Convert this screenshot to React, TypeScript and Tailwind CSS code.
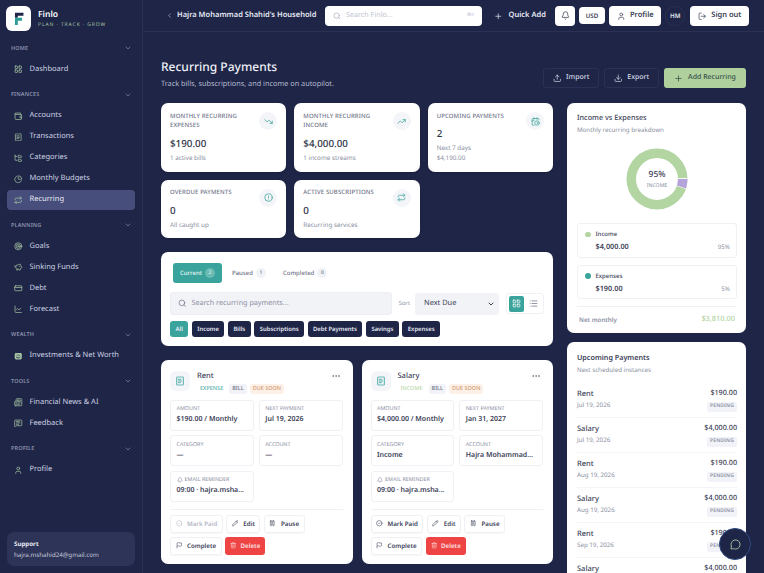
import type { ComponentType } from "react";
import {
  Bell,
  CalendarClock,
  ChartLine,
  ChartPie,
  ChevronDown,
  ChevronLeft,
  CircleAlert,
  CircleCheck,
  CreditCard,
  Download,
  Ellipsis,
  Flag,
  FolderTree,
  LayoutGrid,
  List,
  LogOut,
  MessageCircle,
  MessageSquareText,
  Newspaper,
  Pause,
  Pencil,
  PiggyBank,
  Plus,
  ReceiptText,
  Repeat,
  Search,
  Target,
  Trash2,
  TrendingDown,
  TrendingUp,
  Upload,
  User,
  Wallet,
  type LucideIcon,
} from "lucide-react";

type IconType = ComponentType<{ className?: string }>;
type NavItem = { label: string; icon: IconType; active?: boolean };

const InvestIcon = ({ className }: { className?: string }) => (
  <svg viewBox="0 0 24 24" className={className}>
    <rect x="2" y="3" width="20" height="18" rx="4" fill="currentColor" />
    <path d="M7 7h10v4H7z" fill="#1e2547" opacity=".45" />
    <path d="M6 14c2 3.5 10 3.5 12 0" fill="none" stroke="#1e2547" strokeWidth="2.5" />
  </svg>
);

const nav: { title: string; items: NavItem[] }[] = [
  { title: "HOME", items: [{ label: "Dashboard", icon: LayoutGrid }] },
  {
    title: "FINANCES",
    items: [
      { label: "Accounts", icon: Wallet },
      { label: "Transactions", icon: ReceiptText },
      { label: "Categories", icon: FolderTree },
      { label: "Monthly Budgets", icon: ChartPie },
      { label: "Recurring", icon: Repeat, active: true },
    ],
  },
  {
    title: "PLANNING",
    items: [
      { label: "Goals", icon: Target },
      { label: "Sinking Funds", icon: PiggyBank },
      { label: "Debt", icon: CreditCard },
      { label: "Forecast", icon: ChartLine },
    ],
  },
  { title: "WEALTH", items: [{ label: "Investments & Net Worth", icon: InvestIcon }] },
  {
    title: "TOOLS",
    items: [
      { label: "Financial News & AI", icon: Newspaper },
      { label: "Feedback", icon: MessageSquareText },
    ],
  },
  { title: "PROFILE", items: [{ label: "Profile", icon: User }] },
];

const Sidebar = () => (
  <aside className="w-[143px] shrink-0 h-full border-r border-[#2a3153] bg-[#1e2547] flex flex-col">
    <div className="flex items-center gap-[7px] px-[6px] pt-[6px]">
      <div className="w-[25px] h-[25px] rounded-[6px] bg-white flex items-center justify-center">
        <svg viewBox="0 0 24 24" className="w-[17px] h-[17px]">
          <path d="M7 4h12v4h-8v3H7z" fill="#1e2547" />
          <path d="M7 11h10v4H11v6H7z" fill="#2f9c95" />
        </svg>
      </div>
      <div>
        <div className="text-[8.5px] leading-[12px] font-semibold text-white">Finlo</div>
        <div className="text-[5px] leading-[8px] tracking-[0.18em] text-[#a9c6a4]">PLAN · TRACK · GROW</div>
      </div>
    </div>
    <nav className="mt-[9px] flex flex-col gap-[7.5px]">
      {nav.map((section) => (
        <div key={section.title}>
          <div className="h-[16px] flex items-center justify-between pl-[11px] pr-[10px]">
            <span className="text-[5.5px] font-semibold tracking-[0.03em] text-[#8a91ad]">{section.title}</span>
            <ChevronDown className="w-[8px] h-[8px] text-[#8a91ad]" />
          </div>
          <div className="flex flex-col gap-[1px] mt-[3px]">
            {section.items.map((item) => (
              <div
                key={item.label}
                className={`mx-[7px] h-[20px] pt-[1px] rounded-[4px] flex items-center gap-[7px] pl-[7px] text-[7.5px] ${
                  item.active ? "bg-[#474e7c] text-[#e7e9f3]" : "text-[#cdd1e2]"
                }`}
              >
                <item.icon className="w-[8.5px] h-[8.5px] text-[#a9c6a4]" />
                {item.label}
              </div>
            ))}
          </div>
        </div>
      ))}
    </nav>
    <div className="mt-auto mx-[7px] mb-[7px] h-[34px] rounded-[7px] bg-[#2e3457] px-[7px] flex flex-col justify-center">
      <div className="text-[6.2px] leading-[11px] font-bold text-[#e7e9f3]">Support</div>
      <div className="text-[6.2px] leading-[11px] text-[#c5c9dc]">hajra.mshahid24@gmail.com</div>
    </div>
  </aside>
);

const TopButton = ({ icon: Icon, label }: { icon: LucideIcon; label: string }) => (
  <div className="h-[20px] pt-[1px] px-[7.5px] rounded-[4px] bg-white flex items-center gap-[5px] text-[7.5px] font-semibold text-[#3c4258]">
    <Icon className="w-[8.5px] h-[8.5px]" />
    {label}
  </div>
);

const Topbar = () => (
  <header className="h-[32px] shrink-0 border-b border-[#2a3153] flex items-center pl-[23px]">
    <ChevronLeft className="w-[7px] h-[7px] text-[#c5c9dc]" />
    <div className="ml-[4px] pt-[1px] w-[148px] text-[7.5px] font-semibold text-[#e7e9f3] whitespace-nowrap">Hajra Mohammad Shahid's Household</div>
    <div className="w-[157px] h-[20px] rounded-[4px] bg-white flex items-center px-[8px] gap-[5px]">
      <Search className="w-[8px] h-[8px] text-[#a4a9bb]" />
      <span className="text-[7.2px] text-[#c0c4d2]">Search Finlo...</span>
      <span className="ml-auto text-[4.5px] text-[#c0c4d2]">⌘K</span>
    </div>
    <div className="ml-[12px] pt-[1px] w-[61px] flex items-center gap-[6px] text-[7.5px] font-semibold text-[#e7e9f3]">
      <Plus className="w-[8.5px] h-[8.5px]" />
      Quick Add
    </div>
    <div className="w-[20px] h-[20px] rounded-[4px] bg-white flex items-center justify-center">
      <Bell className="w-[9px] h-[9px] text-[#3c4258]" />
    </div>
    <div className="ml-[4px] w-[26px] h-[17px] rounded-[4px] bg-white flex items-center justify-center text-[6.2px] font-semibold text-[#3c4258]">USD</div>
    <div className="ml-[4px]">
      <TopButton icon={User} label="Profile" />
    </div>
    <div className="ml-[4px] w-[20px] h-[20px] rounded-full border border-[#2a3153] flex items-center justify-center text-[6.2px] font-semibold text-[#e7e9f3]">HM</div>
    <div className="ml-[5px]">
      <TopButton icon={LogOut} label="Sign out" />
    </div>
  </header>
);

const StatCard = ({
  title,
  value,
  lines,
  icon: Icon,
}: {
  title: string;
  value: string;
  lines: string[];
  icon: LucideIcon;
}) => (
  <div className="relative rounded-[7px] bg-white pl-[9px] pr-[10px] pt-[8.5px] pb-[8.5px] shadow-[0_1px_2px_rgba(0,0,0,.2)]">
    <div className="w-[86px] text-[6px] leading-[9.5px] font-medium tracking-[0.02em] text-[#6f7488]">{title}</div>
    <div className="mt-[5px] text-[9.8px] leading-[15px] font-medium text-[#2e3347]">{value}</div>
    <div className="mt-[2px] flex flex-col">
      {lines.map((line) => (
        <div key={line} className="text-[6.3px] leading-[10px] text-[#8a8fa2]">{line}</div>
      ))}
    </div>
    <div className="absolute right-[9px] top-[9px] w-[18px] h-[18px] rounded-full bg-[#f3f5f9] flex items-center justify-center">
      <Icon className="w-[9px] h-[9px] text-[#3aa39b]" />
    </div>
  </div>
);

const Filters = () => (
  <div className="rounded-[7px] bg-white pl-[9px] pr-[9px] pt-[11px] h-[94px]">
    <div className="flex items-center pl-[3px] text-[6px]">
      <div className="h-[20px] w-[49px] rounded-[3px] bg-[#3aa39b] text-[#eaf6f5] flex items-center justify-center gap-[3px] font-medium">
        Current
        <span className="w-[10px] h-[10px] rounded-full bg-[#69bbb4] flex items-center justify-center text-[5px] leading-none">2</span>
      </div>
      <div className="ml-[10px] flex items-center gap-[3px] text-[#6f7488] font-medium">
        Paused
        <span className="w-[10px] h-[10px] rounded-full bg-[#f0f2f7] flex items-center justify-center text-[5px] leading-none">1</span>
      </div>
      <div className="ml-[17px] flex items-center gap-[3px] text-[#6f7488] font-medium">
        Completed
        <span className="w-[10px] h-[10px] rounded-full bg-[#f0f2f7] flex items-center justify-center text-[5px] leading-none">0</span>
      </div>
    </div>
    <div className="mt-[9px] flex items-center">
      <div className="w-[222px] h-[23px] rounded-[3px] bg-[#f2f3f7] border border-[#eceef3] flex items-center gap-[5px] pl-[7px]">
        <Search className="w-[8.5px] h-[8.5px] text-[#6f7488]" />
        <span className="text-[7.2px] text-[#8a8fa2]">Search recurring payments...</span>
      </div>
      <span className="ml-[7px] text-[5.8px] text-[#8a8fa2]">Sort</span>
      <div className="ml-[5px] w-[84px] h-[22px] rounded-[3px] bg-[#f2f3f7] flex items-center justify-between pl-[9px] pr-[4px] text-[7.4px] text-[#3c4258]">
        Next Due
        <ChevronDown className="w-[8px] h-[8px]" strokeWidth={3} />
      </div>
      <div className="ml-[7px] w-[38px] h-[21px] rounded-[3px] border border-[#f0f1f5] flex items-center px-[2px] gap-[2px]">
        <div className="w-[16px] h-[16px] rounded-[2px] bg-[#3aa39b] flex items-center justify-center">
          <LayoutGrid className="w-[9px] h-[9px] text-white" />
        </div>
        <div className="w-[16px] h-[16px] flex items-center justify-center">
          <List className="w-[9px] h-[9px] text-[#6f7488]" />
        </div>
      </div>
    </div>
    <div className="mt-[6px] flex gap-[3.5px] text-[5.9px] font-semibold text-[#e7e9f3]">
      <div className="h-[16px] px-[5.5px] rounded-[3px] bg-[#3aa39b] flex items-center">All</div>
      {["Income", "Bills", "Subscriptions", "Debt Payments", "Savings", "Expenses"].map((chip) => (
        <div key={chip} className="h-[16px] px-[5.5px] rounded-[3px] bg-[#1e2547] flex items-center">{chip}</div>
      ))}
    </div>
  </div>
);

const InfoBox = ({ label, value, bell }: { label: string; value: string; bell?: boolean }) => (
  <div className="rounded-[3px] border border-[#f0f1f5] h-[31px] px-[5.5px] flex flex-col justify-center min-w-0">
    <div className="flex items-center gap-[2px] text-[5.4px] leading-[9px] text-[#8a8fa2]">
      {bell && <Bell className="w-[6px] h-[6px]" />}
      {label}
    </div>
    <div className="text-[7px] leading-[13px] font-semibold text-[#3c4258] whitespace-nowrap">{value}</div>
  </div>
);

const ActionButton = ({
  icon: Icon,
  label,
  muted,
}: {
  icon: LucideIcon;
  label: string;
  muted?: boolean;
}) => (
  <div
    className={`h-[18px] px-[4.5px] rounded-[3px] border border-[#f0f1f5] shadow-[0_1px_1px_rgba(0,0,0,.04)] flex items-center gap-[5px] text-[6.2px] font-semibold ${
      muted ? "text-[#b4b8c5]" : "text-[#3c4258]"
    }`}
  >
    <Icon className="w-[6.5px] h-[6.5px]" />
    {label}
  </div>
);

const PaymentCard = ({
  name,
  kind,
  kindClass,
  amount,
  next,
  category,
  account,
  mutedPaid,
}: {
  name: string;
  kind: string;
  kindClass: string;
  amount: string;
  next: string;
  category: string;
  account: string;
  mutedPaid?: boolean;
}) => (
  <div className="relative rounded-[7px] bg-white pl-[9px] pr-[10px] pt-[11px] h-[204px]">
    <div className="flex">
      <div className="w-[20px] h-[20px] rounded-[6px] bg-[#f3f5f9] flex items-center justify-center">
        <ReceiptText className="w-[10px] h-[10px] text-[#3aa39b]" />
      </div>
      <div className="ml-[7px]">
        <div className="text-[7.5px] leading-[10px] font-medium text-[#3c4258]">{name}</div>
        <div className="mt-[2.5px] flex items-center gap-[3px] text-[5.5px] font-medium">
          <span className={`px-[3px] leading-[9px] py-[0.5px] ${kindClass}`}>{kind}</span>
          <span className="px-[3px] leading-[9px] py-[0.5px] rounded-[3px] bg-[#f2f3f8] text-[#6f7488]">BILL</span>
          <span className="px-[3px] leading-[9px] py-[0.5px] rounded-[3px] bg-[#fdf1e7] text-[#d39a74]">DUE SOON</span>
        </div>
      </div>
    </div>
    <Ellipsis className="absolute right-[12px] top-[11px] w-[10px] h-[10px] text-[#6f7488]" />
    <div className="mt-[6px] grid grid-cols-2 gap-x-[5px] gap-y-[4.5px]">
      <InfoBox label="AMOUNT" value={amount} />
      <InfoBox label="NEXT PAYMENT" value={next} />
      <InfoBox label="CATEGORY" value={category} />
      <InfoBox label="ACCOUNT" value={account} />
      <InfoBox label="EMAIL REMINDER" value="09:00 · hajra.msha..." bell />
    </div>
    <div className="mt-[7px] pt-[5px] border-t border-[#f0f1f5] flex flex-col gap-[4px]">
      <div className="flex gap-[3.5px]">
        <ActionButton icon={CircleCheck} label="Mark Paid" muted={mutedPaid} />
        <ActionButton icon={Pencil} label="Edit" />
        <ActionButton icon={Pause} label="Pause" />
      </div>
      <div className="flex gap-[3.5px]">
        <ActionButton icon={Flag} label="Complete" />
        <div className="h-[18px] px-[5px] rounded-[3px] bg-[#ef4444] flex items-center gap-[4px] text-[6.2px] font-semibold text-[#fde2e2]">
          <Trash2 className="w-[6.5px] h-[6.5px]" />
          Delete
        </div>
      </div>
    </div>
  </div>
);

const Donut = () => (
  <svg viewBox="0 0 62 62" className="w-[62px] h-[62px]">
    <circle cx="31" cy="31" r="25.75" fill="none" stroke="#b2d5a2" strokeWidth="9.5" />
    <circle cx="31" cy="31" r="25.75" fill="none" stroke="#fff" strokeWidth="9.5" strokeDasharray="9.5 152.3" transform="rotate(-2 31 31)" />
    <circle cx="31" cy="31" r="25.75" fill="none" stroke="#b5a3dc" strokeWidth="9.5" strokeDasharray="8.09 153.7" />
  </svg>
);

const LegendBox = ({ label, value, pct, dot }: { label: string; value: string; pct: string; dot: string }) => (
  <div className="rounded-[3px] border border-[#f0f1f5] h-[34.5px] pt-[2px] pl-[7px] pr-[6px] flex flex-col justify-center">
    <div className="flex items-center gap-[5px] text-[6px] leading-[10px] font-medium text-[#3c4258]">
      <span className={`w-[5.5px] h-[5.5px] rounded-full ${dot}`} />
      {label}
    </div>
    <div className="mt-[2px] flex items-center justify-between pl-[10.5px]">
      <span className="text-[7.3px] leading-[12px] font-semibold text-[#3c4258]">{value}</span>
      <span className="text-[6.2px] leading-[12px] text-[#8a8fa2]">{pct}</span>
    </div>
  </div>
);

const BreakdownCard = () => (
  <div className="rounded-[7px] bg-white pl-[10px] pr-[9px] pt-[9px] h-[230px]">
    <div className="text-[7.25px] leading-[12px] font-medium text-[#3c4258]">Income vs Expenses</div>
    <div className="text-[6.2px] leading-[12px] text-[#8a8fa2]">Monthly recurring breakdown</div>
    <div className="relative mt-[12px] flex justify-center">
      <Donut />
      <div className="absolute inset-0 flex flex-col items-center justify-center">
        <div className="text-[8.5px] leading-[12px] font-medium text-[#3c4258]">95%</div>
        <div className="text-[5.2px] leading-[8px] text-[#8a8fa2]">INCOME</div>
      </div>
    </div>
    <div className="mt-[13px] flex flex-col gap-[7px]">
      <LegendBox label="Income" value="$4,000.00" pct="95%" dot="bg-[#b2d5a2]" />
      <LegendBox label="Expenses" value="$190.00" pct="5%" dot="bg-[#3aa39b]" />
    </div>
    <div className="mt-[7px] pt-[7px] border-t border-[#f0f1f5] px-[2px] flex items-center justify-between">
      <span className="text-[6.2px] font-semibold text-[#8a8fa2]">Net monthly</span>
      <span className="text-[7.4px] font-medium text-[#b2d5a2]">$3,810.00</span>
    </div>
  </div>
);

const upcoming = [
  ["Rent", "Jul 19, 2026", "$190.00"],
  ["Salary", "Jul 19, 2026", "$4,000.00"],
  ["Rent", "Aug 19, 2026", "$190.00"],
  ["Salary", "Aug 19, 2026", "$4,000.00"],
  ["Rent", "Sep 19, 2026", "$190.00"],
  ["Salary", "Sep 19, 2026", "$4,000.00"],
];

const UpcomingCard = () => (
  <div className="rounded-[7px] bg-white pl-[10px] pr-[9px] pt-[10px]">
    <div className="text-[7.2px] leading-[12px] font-semibold text-[#3c4258]">Upcoming Payments</div>
    <div className="text-[6.2px] leading-[12px] text-[#8a8fa2]">Next scheduled instances</div>
    <div className="mt-[6.5px] flex flex-col">
      {upcoming.map(([name, date, amount], i) => (
        <div key={i} className="h-[35px] border-b border-[#f3f4f8] flex items-center justify-between">
          <div>
            <div className="text-[7.5px] leading-[11px] font-medium text-[#3c4258]">{name}</div>
            <div className="text-[6.2px] leading-[10px] text-[#8a8fa2]">{date}</div>
          </div>
          <div className="flex flex-col items-end gap-[3px]">
            <div className="text-[7.2px] leading-[11px] font-medium text-[#3c4258]">{amount}</div>
            <div className="h-[10px] px-[3px] rounded-[2px] bg-[#f2f3f8] flex items-center text-[5px] font-semibold tracking-[0.03em] text-[#8a8fa2]">PENDING</div>
          </div>
        </div>
      ))}
    </div>
  </div>
);

export default function App() {
  return (
    <div className="relative w-[764px] h-[573px] overflow-hidden bg-[#1e2547] flex font-['Noto_Sans',sans-serif] antialiased [text-rendering:geometricPrecision]">
      <Sidebar />
      <main className="flex-1 min-w-0 flex flex-col">
        <Topbar />
        <div className="px-[18px]">
          <div className="mt-[24.5px] flex items-start justify-between">
            <div>
              <h1 className="text-[12px] leading-[19px] font-medium text-[#eef0f7]">Recurring Payments</h1>
              <p className="mt-[3px] text-[7.3px] leading-[11px] text-[#b5bad0]">Track bills, subscriptions, and income on autopilot.</p>
            </div>
            <div className="mt-[11.5px] flex gap-[5px] text-[7px] font-medium text-[#d5d8e6]">
              <div className="w-[56px] h-[20px] pt-[1px] rounded-[3px] border border-[#2a3153] flex items-center justify-center gap-[5px]">
                <Upload className="w-[8.5px] h-[8.5px]" />
                Import
              </div>
              <div className="w-[55px] h-[20px] pt-[1px] rounded-[3px] border border-[#2a3153] flex items-center justify-center gap-[5px]">
                <Download className="w-[8.5px] h-[8.5px]" />
                Export
              </div>
              <div className="w-[82px] h-[20px] pt-[1px] rounded-[3px] bg-[#afd09d] flex items-center justify-center gap-[5px] text-[#35504a]">
                <Plus className="w-[9px] h-[9px]" />
                Add Recurring
              </div>
            </div>
          </div>
          <div className="mt-[13.5px] grid grid-cols-[392px_179px] gap-x-[14px] items-start">
            <div className="flex flex-col gap-[14px]">
              <div className="grid grid-cols-3 gap-[8px] items-stretch">
                <StatCard title="MONTHLY RECURRING EXPENSES" value="$190.00" lines={["1 active bills"]} icon={TrendingDown} />
                <StatCard title="MONTHLY RECURRING INCOME" value="$4,000.00" lines={["1 income streams"]} icon={TrendingUp} />
                <StatCard title="UPCOMING PAYMENTS" value="2" lines={["Next 7 days", "$4,190.00"]} icon={CalendarClock} />
                <StatCard title="OVERDUE PAYMENTS" value="0" lines={["All caught up"]} icon={CircleAlert} />
                <StatCard title="ACTIVE SUBSCRIPTIONS" value="0" lines={["Recurring services"]} icon={Repeat} />
              </div>
              <Filters />
              <div className="grid grid-cols-2 gap-[9px]">
                <PaymentCard name="Rent" kind="EXPENSE" kindClass="text-[#5bb3ab]" amount="$190.00 / Monthly" next="Jul 19, 2026" category="—" account="—" mutedPaid />
                <PaymentCard name="Salary" kind="INCOME" kindClass="text-[#bcd9ae]" amount="$4,000.00 / Monthly" next="Jan 31, 2027" category="Income" account="Hajra Mohammad..." />
              </div>
            </div>
            <div className="flex flex-col gap-[9px]">
              <BreakdownCard />
              <UpcomingCard />
            </div>
          </div>
        </div>
      </main>
      <div className="absolute left-[719px] top-[528px] w-[32px] h-[32px] rounded-full bg-[#1e2547] border border-[#2f4a80] flex items-center justify-center">
        <MessageCircle className="w-[11px] h-[11px] text-[#a9c6a4]" />
      </div>
    </div>
  );
}
